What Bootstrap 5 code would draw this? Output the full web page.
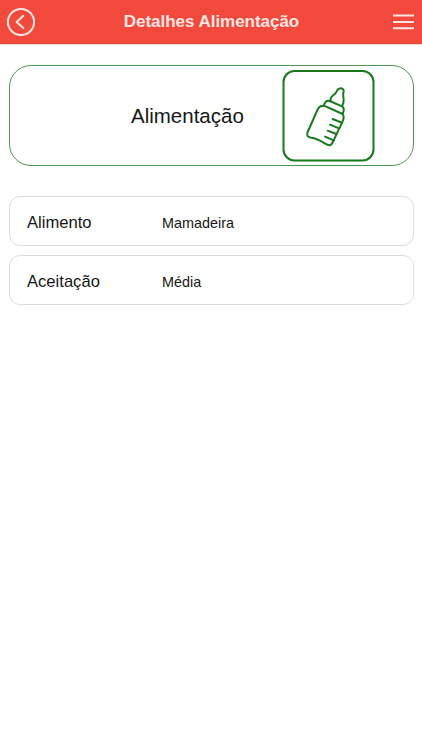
<!DOCTYPE html>
<html lang="pt-BR">
<head>
<meta charset="utf-8">
<meta name="viewport" content="width=device-width, initial-scale=1">
<title>Detalhes Alimentação</title>
<link href="https://cdn.jsdelivr.net/npm/bootstrap@5.3.0/dist/css/bootstrap.min.css" rel="stylesheet">
<style>
body{font-family:"Liberation Sans",Arial,sans-serif;color:#161616;background:#fff}
.topbar{height:44px;background:#f1493c;border-bottom:1px solid #d9493d;padding:0 8px 0 6px;color:#ffe6e2;box-shadow:0 1px 0 #fbd9d6}
.topbar h1{font-size:17px;font-weight:700;letter-spacing:-.03px;line-height:20px;padding:1px 6px 0 0}
.topbar svg{display:block}
.hero-box{height:101px;margin:21px 8px 0 9px;border:1px solid #4d9552;border-radius:22px;padding:0 38px 0 121px}
.hero-box h2{font-size:20.5px;line-height:24px;font-weight:400}
.detail-list{margin:30px 8px 0 9px;gap:9px}
.detail-item{height:50px;border:1px solid #dedede;border-radius:11px;padding:5px 16px 0 17px}
.detail-name{width:135px;font-size:16.6px}
.detail-value{font-size:14.4px;padding-top:1px}
</style>
</head>
<body>
<header class="topbar d-flex align-items-center justify-content-between">
  <a href="#" class="text-reset" aria-label="Voltar">
    <svg width="30" height="30" viewBox="0 0 30 30" fill="none" stroke="currentColor" stroke-width="2"><circle cx="15" cy="15" r="13.1"/><path d="M17.3 8.7 10.6 14.9l6.7 6.2" stroke-linecap="round" stroke-linejoin="round"/></svg>
  </a>
  <h1 class="m-0">Detalhes Alimentação</h1>
  <a href="#" class="text-reset" aria-label="Menu">
    <svg width="21" height="16" viewBox="0 0 21 16" fill="none" stroke="currentColor" stroke-width="2"><path d="M0 1.6h21M0 7.9h21M0 14.2h21"/></svg>
  </a>
</header>
<main>
  <section class="hero-box d-flex align-items-center justify-content-between">
    <h2 class="m-0">Alimentação</h2>
    <svg width="93" height="92" viewBox="0 0 93 92" fill="none" stroke="#18781d" stroke-width="2">
      <rect x="1.5" y="1" width="90" height="89.5" rx="11"/>
      <g transform="translate(18 10) scale(.33333)" stroke-width="6" stroke-linecap="round" stroke-linejoin="round">
        <path d="M92 62C89 51 98 47 105 41C112 35 110 28 117 26C126 23 132 28 131 35C127 43 131 52 131 60C131 68 129 74 126 78"/>
        <path d="M72 77C73 67 80 60 89 63L126 79C133 83 132 93 128 102Z"/>
        <path d="M72 77C61 76 57 80 53 88L23 156C19 166 23 172 34 173C46 173 54 179 64 184C74 189 82 197 90 196C96 194 98 187 101 181L128 124C132 115 132 108 128 102"/>
        <path d="M98 117l27 11M90 134l27 11M83 152l26 10M75 170l26 11"/>
      </g>
    </svg>
  </section>
  <section class="detail-list d-flex flex-column">
    <div class="detail-item d-flex align-items-center"><span class="detail-name">Alimento</span><span class="detail-value">Mamadeira</span></div>
    <div class="detail-item d-flex align-items-center"><span class="detail-name">Aceitação</span><span class="detail-value">Média</span></div>
  </section>
</main>
<script src="https://cdn.jsdelivr.net/npm/bootstrap@5.3.0/dist/js/bootstrap.bundle.min.js"></script>
</body>
</html>
